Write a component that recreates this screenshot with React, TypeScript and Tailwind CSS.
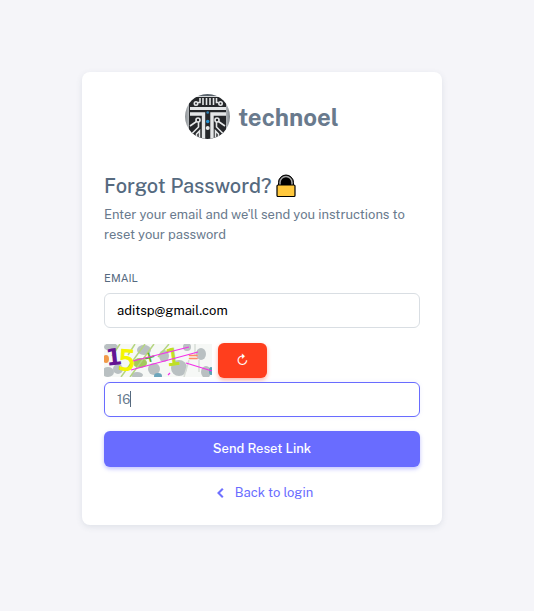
import { useState } from "react";

function Logo() {
  return (
    <svg width="45" height="45" viewBox="0 0 45 45" aria-hidden="true">
      <defs>
        <clipPath id="logo-disc">
          <circle cx="22.5" cy="22.5" r="22.5" />
        </clipPath>
        <linearGradient id="logo-rim" x1="0" y1="0" x2="1" y2="0">
          <stop offset="0" stopColor="#8b9094" />
          <stop offset="0.15" stopColor="#d5d8da" />
          <stop offset="0.85" stopColor="#d5d8da" />
          <stop offset="1" stopColor="#80868b" />
        </linearGradient>
      </defs>
      <g clipPath="url(#logo-disc)">
        <rect width="45" height="45" fill="url(#logo-rim)" />
        <path d="M9 3h27l5 5v31l-5 6H9l-5-6V8z" fill="#25272a" />
        <path d="M10 0h25v2H10z" fill="#59636b" />
        <g fill="none" stroke="#e4e6e7" strokeWidth="1.600">
          <path d="M18 4v7M21.500 4v7M25 4v7M28.500 4v7" />
          <path d="M13 8.500h2V4M33.500 8.500H31.500V4" />
          <circle cx="11" cy="9.500" r="1.700" />
          <circle cx="35.500" cy="9.500" r="1.700" />
          <path d="M5 14.500h36" strokeWidth="3" />
          <path d="M5 20h13.500V45M41 20H27V45" strokeWidth="3.400" />
          <circle cx="13" cy="26" r="2" />
          <circle cx="32" cy="26" r="2" />
          <path d="M11.500 27.500L5 32M33.500 27.500L40 32" />
          <path d="M13.500 28v5l-7 7M31.500 28v5l7 7M14.500 45v-8l-3 3v5M30.500 45v-8l3 3v5" />
        </g>
        <circle cx="22.700" cy="34" r="2" fill="#e8eaeb" />
        <circle cx="22.700" cy="18.500" r="1.300" fill="#3185b8" />
        <circle cx="22.700" cy="27.500" r="1.700" fill="#2592d2" />
      </g>
    </svg>
  );
}

function LockIcon() {
  return (
    <svg width="20" height="24" viewBox="0 0 20 24" aria-hidden="true">
      <path d="M2.500 12V8.500a7.500 7.500 0 0 1 15 0V12z" fill="#000" stroke="#000" />
      <path d="M4 12V8.500a6 6 0 0 1 12 0V12" fill="none" stroke="#a6a6a6" strokeWidth="1.500" />
      <rect x="1" y="11" width="18" height="11.500" rx="1" fill="#ffc83d" stroke="#000" strokeWidth="1.200" />
    </svg>
  );
}

function Captcha() {
  return (
    <svg width="108" height="33" viewBox="0 0 108 33" role="img" aria-label="Captcha" className="overflow-visible">
      <defs>
        <clipPath id="captcha-frame">
          <rect width="108" height="33" />
        </clipPath>
      </defs>
      <g clipPath="url(#captcha-frame)">
        <rect width="108" height="33" fill="#f6f8f6" />
        <g fill="#b9c0c2">
          <ellipse cx="7" cy="3" rx="7" ry="4" />
          <ellipse cx="4" cy="28" rx="6" ry="5" />
          <ellipse cx="14" cy="25" rx="5" ry="5" />
          <ellipse cx="40" cy="6" rx="7" ry="5" />
          <ellipse cx="50" cy="25" rx="6" ry="6" />
          <ellipse cx="60" cy="12" rx="5" ry="6" />
          <ellipse cx="75" cy="24" rx="8" ry="8" />
          <ellipse cx="83" cy="3" rx="4" ry="4" />
          <ellipse cx="97" cy="10" rx="5" ry="6" />
          <ellipse cx="102" cy="28" rx="5" ry="6" />
          <ellipse cx="33" cy="31" rx="6" ry="3" />
        </g>
        <ellipse cx="2" cy="15" rx="3" ry="4" fill="#f29a48" />
        <ellipse cx="54" cy="32" rx="4" ry="3" fill="#6ba5bb" />
        <ellipse cx="107" cy="27" rx="2" ry="4" fill="#5ba4b5" />
        <ellipse cx="36" cy="19" rx="7" ry="5" fill="#a4ca5c" />
        <g fill="none" stroke="#b5d582" strokeWidth="1.500">
          <path d="M41 0L17 33M50 0L26 33M16 0L8 12M65 0L54 13M31 0L24 11" />
          <path d="M85 16L80 33M95 16V28M91 0V12" stroke="#d8ddd8" />
        </g>
      </g>
      <g fontFamily="'DejaVu Sans', sans-serif">
        <text x="2" y="21" fontSize="23" fontWeight="700" fill="#641493" transform="rotate(-6 10 15)">1</text>
        <text x="14" y="26" fontSize="28" fill="#f4f500" stroke="#f4f500" transform="rotate(4 22 17)">5</text>
        <text x="39" y="18" fontSize="15" fontWeight="700" fill="#5bae28" transform="rotate(-15 46 12)">+</text>
        <text x="62" y="21" fontSize="23" fill="#bfdf25" stroke="#bfdf25" transform="rotate(-8 70 14)">1</text>
        <text x="84" y="17" fontSize="13" fill="#ff8a66" stroke="#ff8a66" strokeWidth="0.500">=</text>
      </g>
      <path d="M29 17L85 3M27 26L94 8M82 19L108 27M64 31l2-2" fill="none" stroke="#f331e8" strokeWidth="1.200" />
    </svg>
  );
}

export default function App() {
  const [email, setEmail] = useState("aditsp@gmail.com");
  const [answer, setAnswer] = useState("16");

  return (
    <main className="flex min-h-screen items-center justify-center bg-[#f5f5f9] pb-3.5 pr-2.5 font-['Public_Sans',Inter,sans-serif] text-[13px] leading-5 text-[#697a8d]">
      <section className="w-full max-w-[360px] rounded-lg bg-white px-[22px] pb-[22px] pt-[22px] shadow-[0_2px_6px_rgba(67,89,113,0.12)]">
        <a href="#" className="mb-[35px] flex items-center justify-center gap-2">
          <Logo />
          <span className="text-[24px] font-bold leading-8">technoel</span>
        </a>
        <h1 className="mb-[7px] flex items-center gap-1 text-[20px] font-medium leading-6 text-[#566a7f]">
          Forgot Password?
          <LockIcon />
        </h1>
        <p className="mb-[25px]">Enter your email and we'll send you instructions to reset your password</p>
        <form onSubmit={(e) => e.preventDefault()}>
          <label htmlFor="email" className="mb-[7px] block text-[11px] uppercase leading-4 text-[#566a7f]">
            Email
          </label>
          <input
            id="email"
            type="email"
            value={email}
            onChange={(e) => setEmail(e.target.value)}
            className="block h-[35px] w-full rounded-md border border-[#d9dee3] bg-white px-3 text-black outline-none"
          />
          <div className="mb-1 mt-[15px] flex items-center gap-1.5">
            <Captcha />
            <button
              type="button"
              aria-label="Reload captcha"
              className="h-[35px] w-[49px] rounded-md bg-[#ff3e1d] text-white shadow-[0_2px_4px_rgba(255,62,29,0.4)]"
            >
              ↻
            </button>
          </div>
          <div className="relative">
            <input
              type="text"
              aria-label="Captcha answer"
              value={answer}
              onChange={(e) => setAnswer(e.target.value)}
              className="block h-[35px] w-full rounded-md border border-[#696cff] bg-white px-3 text-[#697a8d] caret-transparent shadow-[0_0_4px_rgba(105,108,255,0.1)] outline-none"
            />
            <span className="absolute left-[26px] top-[9px] h-4 w-px bg-[#566a7f]" />
          </div>
          <button
            type="submit"
            className="mt-3.5 h-9 w-full rounded-md bg-[#696cff] font-medium text-white shadow-[0_2px_4px_rgba(105,108,255,0.4)]"
          >
            Send Reset Link
          </button>
        </form>
        <div className="mt-4 flex justify-center">
          <a href="#" className="flex items-center gap-1 text-[#696cff]">
            <svg width="20" height="20" viewBox="0 0 24 24" fill="currentColor" aria-hidden="true">
              <path d="M13.293 6.293 7.586 12l5.707 5.707 1.414-1.414L10.414 12l4.293-4.293z" stroke="currentColor" strokeWidth="0.500" />
            </svg>
            Back to login
          </a>
        </div>
      </section>
    </main>
  );
}
